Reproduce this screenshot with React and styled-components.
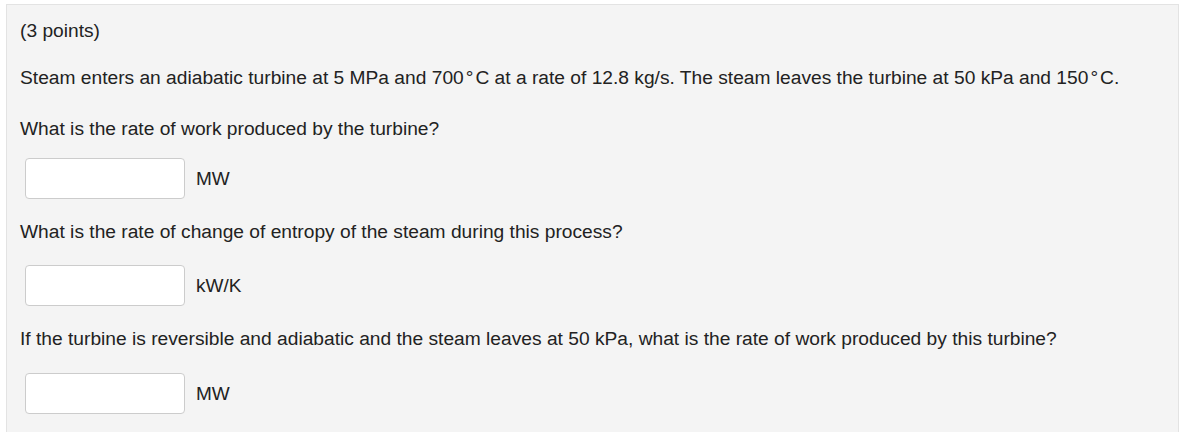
import React from 'react';
import styled, { createGlobalStyle } from 'styled-components';

const GlobalStyle = createGlobalStyle`
  html, body {
    margin: 0;
    padding: 0;
    background: #ffffff;
  }
  body {
    font-family: "Liberation Sans", Arial, sans-serif;
  }
`;

const Page = styled.div`
  padding: 4px 2px 0 6px;
  height: 432px;
  box-sizing: border-box;
  overflow: hidden;
`;

const Panel = styled.section`
  background: #f4f4f4;
  border: 1px solid #e3e3e3;
  border-bottom: none;
  padding: 15px 13px 40px;
  color: #222;
  font-size: 19.2px;
  line-height: 22px;
  min-height: 460px;
  box-sizing: border-box;
`;

const Para = styled.p`
  margin: ${(p) => p.$top || 0}px 0 0;
  white-space: nowrap;
`;

// degree sign sits apart from the digits, like the math renderer draws it
const Deg = styled.span`
  margin: 0 2px 0 2px;
`;

const AnswerRow = styled.div`
  display: flex;
  align-items: center;
  gap: 11px;
  margin: ${(p) => p.$top || 0}px 0 0 5px;
`;

const Field = styled.input`
  width: 160px;
  height: 41px;
  box-sizing: border-box;
  border: 1px solid #cccccc;
  border-radius: 4px;
  background: #ffffff;
  padding: 4px 8px;
  font: inherit;
  outline: none;
`;

const Unit = styled.span`
  font-size: 19px;
`;

const Answer = ({ top, unit }) => (
  <AnswerRow $top={top}>
    <Field type="text" />
    <Unit>{unit}</Unit>
  </AnswerRow>
);

export default function App() {
  return (
    <>
      <GlobalStyle />
      <Page>
        <Panel>
          <Para>(3 points)</Para>
          <Para $top={25}>
            Steam enters an adiabatic turbine at 5 MPa and 700<Deg>°</Deg>C at a rate of 12.8 kg/s. The steam leaves the turbine at 50 kPa and 150<Deg>°</Deg>C.
          </Para>
          <Para $top={29}>What is the rate of work produced by the turbine?</Para>
          <Answer top={18} unit="MW" />
          <Para $top={22}>What is the rate of change of entropy of the steam during this process?</Para>
          <Answer top={22} unit="kW/K" />
          <Para $top={22}>
            If the turbine is reversible and adiabatic and the steam leaves at 50 kPa, what is the rate of work produced by this turbine?
          </Para>
          <Answer top={23} unit="MW" />
        </Panel>
      </Page>
    </>
  );
}
